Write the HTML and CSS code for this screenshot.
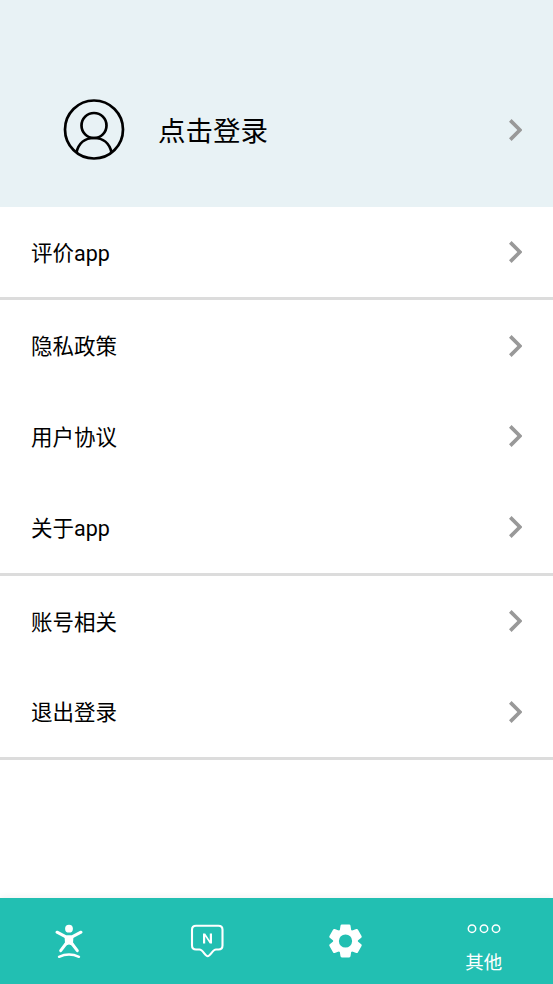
FILE: index.html
```html
<!DOCTYPE html>
<html lang="zh-CN">
<head>
<meta charset="utf-8">
<title>其他</title>
<link rel="stylesheet" href="styles.css">
</head>
<body>
<svg width="0" height="0" class="defs"><symbol id="chevron" viewBox="8.59 6 7.41 12"><path d="M10 6 8.59 7.41 13.17 12l-4.58 4.59L10 18l6-6z"/></symbol></svg>
<header class="profile">
  <svg class="avatar" viewBox="0 0 62 62"><circle cx="31" cy="30.500" r="29"/><circle cx="31" cy="26.500" r="12.5"/><path d="M13.5 53.500C15.5 44.500 22 39 31 39S46.500 44.500 48.500 53.500"/></svg>
  <span class="login">点击登录</span>
  <svg class="chevron"><use href="#chevron"/></svg>
</header>
<main>
  <section class="group">
    <div class="row"><span>评价app</span><svg class="chevron"><use href="#chevron"/></svg></div>
  </section>
  <section class="group">
    <div class="row"><span>隐私政策</span><svg class="chevron"><use href="#chevron"/></svg></div>
    <div class="row"><span>用户协议</span><svg class="chevron"><use href="#chevron"/></svg></div>
    <div class="row"><span>关于app</span><svg class="chevron"><use href="#chevron"/></svg></div>
  </section>
  <section class="group">
    <div class="row"><span>账号相关</span><svg class="chevron"><use href="#chevron"/></svg></div>
    <div class="row"><span>退出登录</span><svg class="chevron"><use href="#chevron"/></svg></div>
  </section>
</main>
<nav class="tabs">
  <div class="tab"><svg class="icon" viewBox="0 0 36 36"><circle cx="18" cy="5.700" r="3.900" fill="#fff"/><path class="limbs" d="M6 9.200 14.500 13.700H21.500L30 9.200M15.500 20 9.700 27.700M20.500 20 26.300 27.700"/><path fill="#fff" d="M13.500 13H22.500L22 20 23 23 18 21.500 13 23 14 20Z"/><path class="line ground" d="M8 33.800Q18 29.300 28 33.800"/></svg></div>
  <div class="tab"><svg class="icon" viewBox="0 0 36 36"><path class="line" d="M7 2.800H29.500Q33.500 2.800 33.500 6.800V22.500Q33.500 26.500 29.500 26.500H27C23.500 26.500 21.500 33.200 18.700 33.200S14 26.500 10.500 26.500H7Q3 26.500 3 22.500V6.800Q3 2.800 7 2.800Z"/><path fill="#fff" d="M14 10.500H16.200L20.800 17.500V10.500H23V20.500H20.800L16.200 13.500V20.500H14Z"/></svg></div>
  <div class="tab"><svg class="icon" viewBox="0.5 0 36 36"><defs><mask id="hub"><rect width="36" height="36" fill="#fff"/><circle cx="18" cy="18" r="6.600" fill="#000"/></mask><path id="tooth" d="M12 9 13 2.700Q13.200 1.600 14.300 1.600H21.700Q22.800 1.600 23 2.700L24 9V27L23 33.300Q22.800 34.400 21.700 34.400H14.300Q13.200 34.400 13 33.300L12 27Z"/></defs><g mask="url(#hub)" fill="#fff"><circle cx="18" cy="18" r="12.300"/><use href="#tooth"/><use href="#tooth" transform="rotate(60 18 18)"/><use href="#tooth" transform="rotate(120 18 18)"/></g></svg></div>
  <div class="tab active"><svg class="dots" viewBox="0 0 34 12"><circle cx="5" cy="5.700" r="3.700"/><circle cx="17" cy="5.700" r="3.700"/><circle cx="29" cy="5.700" r="3.700"/></svg><span>其他</span></div>
</nav>
</body>
</html>
```
FILE: styles.css
```css
* { box-sizing: border-box; }
body {
  margin: 0;
  height: 984px;
  display: flex;
  flex-direction: column;
  background: #fff;
  color: #000;
  font-family: Roboto, "Noto Sans CJK SC", sans-serif;
  overflow: hidden;
}
svg { display: block; flex: none; }
.defs { position: absolute; }
.profile {
  height: 206.5px;
  flex: none;
  display: flex;
  align-items: center;
  padding: 53px 31px 0 63px;
  background: #e8f2f5;
}
.avatar {
  width: 62px;
  height: 62px;
  fill: none;
  stroke: #000;
  stroke-width: 2.7;
}
.login { margin-left: 33px; font-size: 27.5px; line-height: 40px; padding-top: 4px; }
.chevron { width: 13.5px; height: 22px; margin-left: auto; fill: #999; }
.group { border-bottom: 3px solid #dcdcdc; }
.row {
  height: 90.75px;
  display: flex;
  align-items: center;
  padding: 0 31px;
  font-size: 21.5px;
}
.row span { line-height: 32px; padding-top: 3.5px; }
.tabs {
  height: 86px;
  margin-top: auto;
  display: flex;
  background: #22bfb2;
  color: #fff;
  box-shadow: 0 0 7px rgba(0, 0, 0, .08);
}
.tab {
  flex: 1;
  display: flex;
  flex-direction: column;
  align-items: center;
  justify-content: center;
}
.icon { width: 36px; height: 36px; }
.line { fill: none; stroke: #fff; stroke-width: 2.1; stroke-linecap: round; stroke-linejoin: round; }
.limbs { fill: none; stroke: #fff; stroke-width: 3; stroke-linecap: round; stroke-linejoin: round; }
.ground { stroke-width: 2.4; }
.dots { width: 34px; height: 12px; fill: none; stroke: #fff; stroke-width: 1.5; }
.active { justify-content: flex-start; padding-top: 25px; }
.active span { font-size: 18.5px; line-height: 26px; margin-top: 15px; }
```
